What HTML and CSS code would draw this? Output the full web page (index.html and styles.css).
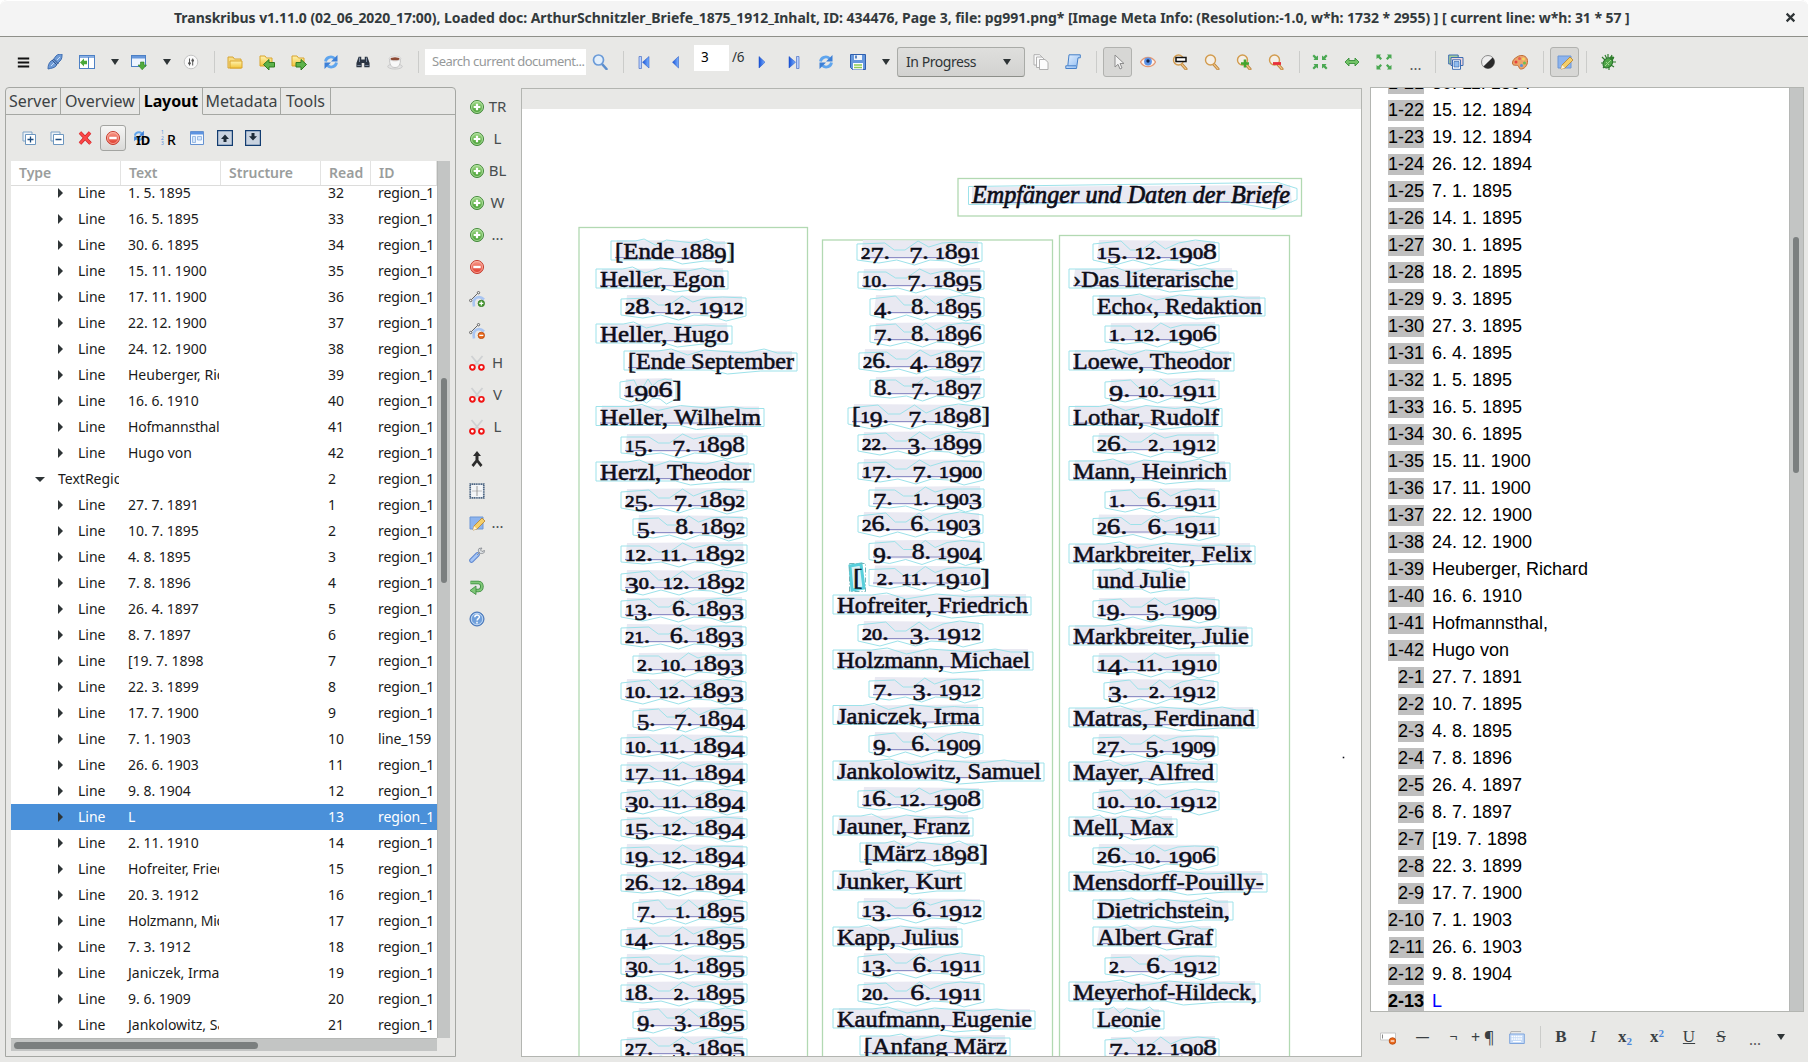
FILE: index.html
```html
<!DOCTYPE html>
<html lang="en">
<head>
<meta charset="utf-8">
<title>Transkribus v1.11.0</title>
<link rel="stylesheet" href="styles.css">
</head>
<body>
<svg class="sprite" aria-hidden="true">
  <defs>
    <linearGradient id="gGreen" x1="0" y1="0" x2="0" y2="1"><stop offset="0" stop-color="#a5dc8c"/><stop offset="1" stop-color="#3f9a2c"/></linearGradient>
    <linearGradient id="gRed" x1="0" y1="0" x2="0" y2="1"><stop offset="0" stop-color="#f9a08f"/><stop offset="1" stop-color="#dd3426"/></linearGradient>
    <linearGradient id="gBlue" x1="0" y1="0" x2="1" y2="0"><stop offset="0" stop-color="#1550d8"/><stop offset="1" stop-color="#7db3ff"/></linearGradient>
    <linearGradient id="gFolder" x1="0" y1="0" x2="0" y2="1"><stop offset="0" stop-color="#fff3b0"/><stop offset="1" stop-color="#f2c53a"/></linearGradient>
    <linearGradient id="gPane" x1="0" y1="0" x2="1" y2="1"><stop offset="0" stop-color="#e6f1ff"/><stop offset="1" stop-color="#8dbbf2"/></linearGradient>
  </defs>
  <symbol id="menu" viewBox="0 0 16 16"><path d="M1 3h14M1 8h14M1 13h14" stroke="#111" stroke-width="2.6"/></symbol>
  <symbol id="plug" viewBox="0 0 16 16"><path d="M1 15c0-4 1-6 3-8l2-1 3-4c2-2 4-2 6-2 0 3 0 5-2 7l-3 3-1 2c-2 2-4 2-8 3z" fill="#6f9bd6" stroke="#3f6db0"/><path d="M5 6l5 5M6.500 5l5 5" stroke="#33548a"/><path d="M4 12l3-3M10 6l3-3" stroke="#c6dcf7"/></symbol>
  <symbol id="panel" viewBox="0 0 16 16"><rect x=".5" y="1.500" width="15" height="13" fill="#fff" stroke="#4d80c4"/><path d="M1 2h14v2H1z" fill="#8ab0e4"/><path d="M9.500 3v11" stroke="#4d80c4"/><path d="M1 8.500l4-4v2.300h3v3.500H5v2.300z" fill="#48a83a"/></symbol>
  <symbol id="window" viewBox="0 0 16 16"><rect x=".5" y="1.500" width="14" height="11" fill="#eef5ff" stroke="#4d80c4"/><path d="M1 2h13v2.500H1z" fill="#6798dc"/><path d="M9.500 8h3.500v3h2.500L11.200 15.800 7 11h2.500z" fill="#52ab3d" stroke="#2e7d22" stroke-width=".6"/></symbol>
  <symbol id="dial" viewBox="0 0 16 16"><circle cx="8" cy="8" r="6.800" fill="#fafafa" stroke="#c4c4c4"/><path d="M6.500 4.500v7M9.700 4.500v7" stroke="#555"/><circle cx="6.500" cy="9.300" r="1.300" fill="#555"/><circle cx="9.700" cy="6.500" r="1.300" fill="#555"/></symbol>
  <symbol id="folder" viewBox="0 0 16 16"><path d="M1 14V3h5l1.500 2H14v9z" fill="#f7dc83" stroke="#d7a534"/><path d="M3 14V7h12v7z" fill="url(#gFolder)" stroke="#d9a42c"/></symbol>
  <symbol id="folderin" viewBox="0 0 16 16"><path d="M1 12V2h5l1.500 2H13v8z" fill="url(#gFolder)" stroke="#d9a42c"/><path d="M4.500 10.500l5.500-5v3h5.500v4.500H10v3z" fill="#5db24a" stroke="#2f7a20"/></symbol>
  <symbol id="folderout" viewBox="0 0 16 16"><path d="M1 12V2h5l1.500 2H13v8z" fill="url(#gFolder)" stroke="#d9a42c"/><path d="M15.500 10.500L10 5.500v3H5v4.500h5v3z" fill="#5db24a" stroke="#2f7a20"/></symbol>
  <symbol id="refresh" viewBox="0 0 16 16"><path d="M2.500 7.500C3 3.500 8 1.500 11.500 4.300" fill="none" stroke="#5fa5ee" stroke-width="2.800"/><path d="M14.500 1v6.500H8z" fill="#3c7fd6"/><path d="M13.500 8.500c-.5 4-5.500 6-9 3.200" fill="none" stroke="#5fa5ee" stroke-width="2.800"/><path d="M1.500 15V8.500H8z" fill="#3c7fd6"/></symbol>
  <symbol id="binoc" viewBox="0 0 16 16"><path d="M3 2h3v3h4V2h3l2.500 7v5H9.500V9h-3v5H.5V9z" fill="#2b3442"/><path d="M1.500 12h4M10.500 12h4M4 3v5M12 3v5" stroke="#8494ab"/></symbol>
  <symbol id="cup" viewBox="0 0 16 16"><ellipse cx="8" cy="12.500" rx="7.300" ry="2.600" fill="#e2e2e2" stroke="#bbb" stroke-width=".6"/><path d="M2.500 4.500c0 6 1.500 9 5.500 9s5.500-3 5.500-9z" fill="#f8f8f8" stroke="#b3b3b3" stroke-width=".7"/><ellipse cx="8" cy="4.500" rx="5.800" ry="2.400" fill="#fff" stroke="#bbb" stroke-width=".6"/><ellipse cx="8" cy="4.700" rx="4.500" ry="1.500" fill="#8c4a34"/></symbol>
  <symbol id="search" viewBox="0 0 16 16"><path d="M10 10l4.500 5" stroke="#5d8fcd" stroke-width="2.600" stroke-linecap="round"/><circle cx="6.500" cy="6" r="5" fill="#e3effb" stroke="#6b9bd8" stroke-width="1.700"/></symbol>
  <symbol id="first" viewBox="0 0 16 16"><path d="M3 2.500h2.500v12H3z" fill="#b9d0ff" stroke="#4a70c4" stroke-width=".7"/><path d="M13 2.500v11.500L6.500 8.200z" fill="url(#gBlue)" stroke="#1d4fc0" stroke-width=".5"/></symbol>
  <symbol id="prev" viewBox="0 0 16 16"><path d="M10.500 2.500v11.500L4.500 8.200z" fill="url(#gBlue)" stroke="#1d4fc0" stroke-width=".5"/></symbol>
  <symbol id="next" viewBox="0 0 16 16"><path d="M5 2.500v11.500l6-5.800z" fill="url(#gBlue)" stroke="#1d4fc0" stroke-width=".5"/></symbol>
  <symbol id="last" viewBox="0 0 16 16"><path d="M10.500 2.500H13v12h-2.500z" fill="#b9d0ff" stroke="#4a70c4" stroke-width=".7"/><path d="M3 2.500v11.500l6.500-5.800z" fill="url(#gBlue)" stroke="#1d4fc0" stroke-width=".5"/></symbol>
  <symbol id="save" viewBox="0 0 16 16"><path d="M.5.500h15v15h-13l-2-2z" fill="#6597dd" stroke="#2f5fae"/><path d="M4 1h8v5H4z" fill="#eef4fb"/><path d="M5 1.500h2v3H5z" fill="#5b86c4"/><path d="M3 9h10v6.500H3z" fill="#fff"/><path d="M4 11h8M4 13.500h8" stroke="#8ecb54" stroke-width="1.400"/></symbol>
  <symbol id="copies" viewBox="0 0 16 16"><g fill="#fcfcfc" stroke="#a9a9a9" stroke-width=".9"><path d="M1 .700h5.500L9 3v8H1z"/><path d="M3.500 3h5.500L11.500 5.500v8h-8z"/><path d="M6.500 5.500H12L15 8.300v7.200H6.500z"/></g></symbol>
  <symbol id="scroll" viewBox="0 0 16 16"><path d="M4 .8h11.300v3H13L11.500 14.500H.8v-2.700h2z" fill="url(#gPane)" stroke="#4680c8"/><path d="M3 11.800h8" stroke="#4680c8"/></symbol>
  <symbol id="pointer" viewBox="0 0 16 16"><path d="M5 1v12l3-2.700 2 4.700 2-1-2-4.500h4z" fill="#f3f3f3" stroke="#8e8e8e"/></symbol>
  <symbol id="eye" viewBox="0 0 16 16"><path d="M.5 8C4 2 12 2 15.500 8 12 14 4 14 .5 8z" fill="#fdf4ef" stroke="#e39a77" stroke-width="1.300"/><circle cx="8" cy="7.500" r="3.900" fill="#5c93e8"/><circle cx="8" cy="7" r="1.700" fill="#13254e"/></symbol>
  <symbol id="mag" viewBox="0 0 16 16"><path d="M9.500 10l4.500 5" stroke="#b97f39" stroke-width="3" stroke-linecap="round"/><path d="M9.500 10l4.500 5" stroke="#f0c684" stroke-width="1.200" stroke-linecap="round"/><circle cx="6.500" cy="6" r="5" fill="#f4efe7" stroke="#d29b4d" stroke-width="1.400"/></symbol>
  <symbol id="magrect" viewBox="0 0 16 16"><use href="#mag"/><path d="M4 3.500h10v4H4z" fill="#fff" stroke="#111" stroke-width="1.500"/></symbol>
  <symbol id="magplus" viewBox="0 0 16 16"><use href="#mag"/><path d="M9 5.500v8M5 9.500h8" stroke="#43a52f" stroke-width="2.600"/></symbol>
  <symbol id="magminus" viewBox="0 0 16 16"><use href="#mag"/><path d="M5 9.500h8" stroke="#e8303b" stroke-width="2.800"/></symbol>
  <symbol id="shrink" viewBox="0 0 16 16"><g fill="#4aa852"><path id="shr" d="M6 6H1.500l1.200-1.600L.5 2 2 .5l2.400 2.200L6 1.500z"/><use href="#shr" transform="matrix(-1 0 0 1 16 0)"/><use href="#shr" transform="matrix(1 0 0 -1 0 16)"/><use href="#shr" transform="matrix(-1 0 0 -1 16 16)"/></g></symbol>
  <symbol id="grow" viewBox="0 0 16 16"><g fill="#4aa852"><path id="gro" d="M.5.500H5L3.800 2.100 6 4.500 4.500 6 2.100 3.800.5 5z"/><use href="#gro" transform="matrix(-1 0 0 1 16 0)"/><use href="#gro" transform="matrix(1 0 0 -1 0 16)"/><use href="#gro" transform="matrix(-1 0 0 -1 16 16)"/></g></symbol>
  <symbol id="fitw" viewBox="0 0 16 16"><path d="M1 8l4-4v2.500h6V4l4 4-4 4V9.500H5V12z" fill="#72c267" stroke="#378f39" stroke-width=".9"/></symbol>
  <symbol id="layers" viewBox="0 0 16 16"><path d="M.7 1h9.500v9H.7z" fill="#a5cf9b" stroke="#3d6db3"/><path d="M3 3.500h12v8H3z" fill="#f0d6dc" stroke="#3d6db3"/><path d="M4.500 5.800h8v9.500h-8z" fill="#fff" stroke="#3d6db3"/><path d="M6 7.500h5v5.500H6z" fill="#8fbbee" stroke="#3d6db3" stroke-width=".7"/></symbol>
  <symbol id="contrast" viewBox="0 0 16 16"><circle cx="8" cy="8" r="6.500" fill="#eee" stroke="#8b8b8b"/><path d="M12.600 3.400a6.500 6.500 0 0 1-9.200 9.200z" fill="#2a2a2a"/></symbol>
  <symbol id="palette" viewBox="0 0 16 16"><path d="M5 3c4-3 10-1.500 10.500 3.500.4 5-3.500 9-7 8.500-2-.5-1-3-3-3.500S.5 12 .5 9s2-4.500 4.500-6z" fill="#eba56b" stroke="#c06c35"/><circle cx="4" cy="8" r="1.500" fill="#e8423e"/><circle cx="7.500" cy="4.500" r="1.500" fill="#e95d52"/><circle cx="11.500" cy="5" r="1.500" fill="#f5da5e"/><circle cx="12.500" cy="9" r="1.500" fill="#6cbf52"/><circle cx="9.500" cy="11.500" r="1.500" fill="#5790dc"/></symbol>
  <symbol id="edit" viewBox="0 0 16 16"><path d="M1 2h13v12H1z" fill="#8db4ee" stroke="#6d97d6"/><path d="M4 15l1-4 8-8 3 3-8 8z" fill="#f5cf69" stroke="#b9812a" stroke-width=".8"/><path d="M4 15l1-4 3 3z" fill="#fff3d8"/></symbol>
  <symbol id="bug" viewBox="0 0 16 16"><path d="M2 3l3 3M8 0l0 4M1 9h4M3 14l3-3M9 16v-4M14 13l-3-2M16 8h-4M14 3l-3 3M5 1l2 4M12 1l-2 4" stroke="#2f7e2c" stroke-width="1.200"/><ellipse cx="7.800" cy="9" rx="4.300" ry="5.600" transform="rotate(40 8 9)" fill="#4ea548" stroke="#28732b"/><path d="M5 12l6-6M6 8l3 3" stroke="#a1d78f"/><circle cx="11.700" cy="4.300" r="2" fill="#2f7e2c"/></symbol>
  <symbol id="plus" viewBox="0 0 16 16"><circle cx="8" cy="8" r="6.500" fill="url(#gGreen)" stroke="#43893a"/><circle cx="8" cy="8" r="5.500" fill="none" stroke="#c6ecb7" stroke-width=".7"/><path d="M8 4.700v6.600M4.700 8h6.600" stroke="#fff" stroke-width="2.200"/></symbol>
  <symbol id="minus" viewBox="0 0 16 16"><circle cx="8" cy="8" r="6.500" fill="url(#gRed)" stroke="#c43a2d"/><circle cx="8" cy="8" r="5.500" fill="none" stroke="#ffc4b8" stroke-width=".7"/><path d="M4.300 8h7.400" stroke="#fff" stroke-width="2.400"/></symbol>
  <symbol id="ptadd" viewBox="0 0 16 16"><path d="M5 15.500c-1-5 0-8 3-9s5 0 7 2" fill="none" stroke="#a9c5f2" stroke-width="2.600"/><path d="M1.500 9.500L9.500 1.500" stroke="#666"/><circle cx="1.700" cy="9.500" r="1.200" fill="#eee" stroke="#666"/><circle cx="9.500" cy="1.700" r="1.200" fill="#eee" stroke="#666"/><circle cx="12.300" cy="12.400" r="3.200" fill="#4b9e35" stroke="#2f741e" stroke-width=".8"/><path d="M12.300 10.400v4M10.300 12.400h4" stroke="#fff" stroke-width="1.200"/></symbol>
  <symbol id="ptdel" viewBox="0 0 16 16"><path d="M5 15.500c-1-5 0-8 3-9s5 0 7 2" fill="none" stroke="#a9c5f2" stroke-width="2.600"/><path d="M1.500 9.500L9.500 1.500" stroke="#666"/><circle cx="1.700" cy="9.500" r="1.200" fill="#eee" stroke="#666"/><circle cx="9.500" cy="1.700" r="1.200" fill="#eee" stroke="#666"/><circle cx="12.300" cy="12.400" r="3.200" fill="#e9691c" stroke="#b64508" stroke-width=".8"/><path d="M10.300 12.400h4" stroke="#fff" stroke-width="1.300"/></symbol>
  <symbol id="cut" viewBox="0 0 16 16"><path d="M2.500 1l7.500 9M13.500 1L6 10" stroke="#cfd1d3" stroke-width="1.800"/><circle cx="3.400" cy="12.300" r="2.400" fill="#fff" stroke="#f01414" stroke-width="1.900"/><circle cx="12.400" cy="12.300" r="2.400" fill="#fff" stroke="#f01414" stroke-width="1.900"/></symbol>
  <symbol id="merge" viewBox="0 0 16 16"><path d="M8 0l4 5H9.500v4l4 5-2 2L8 11.500 4.500 16l-2-2 4-5V5H4z" fill="#2c2c2c"/></symbol>
  <symbol id="table" viewBox="0 0 16 16"><rect x="1.200" y="1.200" width="13.600" height="13.600" fill="#f3f5f7" stroke="#4c6583" stroke-width="1.700" stroke-dasharray="1.300 .5"/><path d="M8 3v10" stroke="#999"/><path d="M3.500 8h9" stroke="#888" stroke-dasharray="1 1"/></symbol>
  <symbol id="wrench" viewBox="0 0 16 16"><path d="M2.500 13.500l6-6" stroke="#5e87cf" stroke-width="4.600" stroke-linecap="round"/><path d="M2.500 13.500l6-6" stroke="#a4c4f5" stroke-width="2.600" stroke-linecap="round"/><path d="M8 8l3-3M10 1.500c-1.500 2 0 5 1.500 5s4 .5 4-3l-2.500 1-1.500-1.500 1.500-2z" stroke="#909499" fill="#dcdfe2"/></symbol>
  <symbol id="undo" viewBox="0 0 16 16"><path d="M1.500 3.500h8c4.500 0 4.500 8 0 8H6" fill="none" stroke="#37863a" stroke-width="3.600"/><path d="M1.500 3.500h8c4.500 0 4.500 8 0 8H6" fill="none" stroke="#7fc777" stroke-width="2"/><path d="M7 7v8.500L1 11.500z" fill="#7fc777" stroke="#37863a" stroke-width=".8"/></symbol>
  <symbol id="help" viewBox="0 0 16 16"><circle cx="8" cy="8" r="7" fill="#6f9fdb" stroke="#4170b4"/><circle cx="8" cy="8" r="5.700" fill="none" stroke="#d4e5f8" stroke-width=".8"/><path d="M5.800 6.300c0-3 4.600-3 4.600-.3 0 1.600-2.300 1.500-2.300 3.400M8 10.800v1.600" fill="none" stroke="#fff" stroke-width="1.500"/></symbol>
  <symbol id="expand" viewBox="0 0 16 16"><path d="M2 2h9v9H2z" fill="#eef3f8" stroke="#7ea3c6"/><path d="M4.500 4.500h10v10h-10z" fill="#fff" stroke="#6c96bf"/><path d="M9.500 6.500v6M6.500 9.500h6" stroke="#1d4d80" stroke-width="1.300"/></symbol>
  <symbol id="collapse" viewBox="0 0 16 16"><path d="M2 2h9v9H2z" fill="#eef3f8" stroke="#7ea3c6"/><path d="M4.500 4.500h10v10h-10z" fill="#fff" stroke="#6c96bf"/><path d="M6.500 9.500h6" stroke="#1d4d80" stroke-width="1.300"/></symbol>
  <symbol id="cross" viewBox="0 0 16 16"><path d="M3 2.500l10.500 11M13 2.500L3 13.500" stroke="#c92026" stroke-width="3.400"/><path d="M3 2.500l10.500 11M13 2.500L3 13.500" stroke="#fb4747" stroke-width="2.400"/></symbol>
  <symbol id="details" viewBox="0 0 16 16"><path d="M1.500 1.500h13v13h-13z" fill="#f4f9ff" stroke="#6592d1"/><path d="M2 2h12v2.500H2z" fill="#5d93e0"/><path d="M3.500 6.500h3v6h-3zM8.500 6.500h4v3.500h-4z" fill="#d6e6fa" stroke="#88aede" stroke-width=".8"/></symbol>
  <symbol id="moveup" viewBox="0 0 16 16"><path d="M.6.600h14.800v14.800H.6z" fill="#c9d3e0" stroke="#123c70" stroke-width="1.200"/><path d="M8 4.500l4 4.500H9.500v3h-3V9H4z" fill="#1e2b38"/></symbol>
  <symbol id="movedown" viewBox="0 0 16 16"><path d="M.6.600h14.800v14.800H.6z" fill="#c9d3e0" stroke="#123c70" stroke-width="1.200"/><path d="M8 10.500L4 6.300h2.500V3h3v3.300H12z" fill="#1e2b38"/></symbol>
  <symbol id="rowdel" viewBox="0 0 16 16"><path d="M.5 4h15v7H.5z" fill="#fff" stroke="#c5c5c5"/><path d="M2.500 5.500v4" stroke="#888"/><circle cx="12.500" cy="12" r="3.300" fill="#e9691c" stroke="#b64508" stroke-width=".8"/><path d="M10.700 12h3.600" stroke="#fff" stroke-width="1.200"/></symbol>
  <symbol id="keyb" viewBox="0 0 16 16"><path d="M1 6l1-3.500h10" fill="none" stroke="#b4b4b4"/><path d="M.7 5h14.600v9.500H.7z" fill="#c6dbf7" stroke="#7fa5dd"/><path d="M2.500 7.500h11M2.500 10h11" stroke="#fff" stroke-width="1.400" stroke-dasharray="1.600 .6"/><path d="M4 12.500h8" stroke="#fff"/></symbol>
</svg>

<div class="window">
  <header class="titlebar"><h1 class="title">Transkribus v1.11.0 (02_06_2020_17:00), Loaded doc: ArthurSchnitzler_Briefe_1875_1912_Inhalt, ID: 434476, Page 3, file: pg991.png* [Image Meta Info: (Resolution:-1.0, w*h: 1732 * 2955) ] [ current line: w*h: 31 * 57 ]</h1><svg class="close" viewBox="0 0 10 10"><path d="M1.500 1.500l7 7M8.500 1.500l-7 7" stroke="#2e3436" stroke-width="2"/></svg></header>

  <div class="toolbar">
    <span class="cell"><svg class="ic ham"><use href="#menu"/></svg></span>
    <span class="cell"><svg class="ic"><use href="#plug"/></svg></span>
    <span class="cell"><svg class="ic"><use href="#panel"/></svg></span>
    <span class="drop"></span>
    <span class="cell"><svg class="ic"><use href="#window"/></svg></span>
    <span class="drop"></span>
    <span class="cell"><svg class="ic"><use href="#dial"/></svg></span>
    <span class="sep"></span>
    <span class="cell"><svg class="ic"><use href="#folder"/></svg></span>
    <span class="cell"><svg class="ic"><use href="#folderin"/></svg></span>
    <span class="cell"><svg class="ic"><use href="#folderout"/></svg></span>
    <span class="cell"><svg class="ic"><use href="#refresh"/></svg></span>
    <span class="cell"><svg class="ic bin"><use href="#binoc"/></svg></span>
    <span class="cell"><svg class="ic"><use href="#cup"/></svg></span>
    <span class="sep"></span>
    <span class="field search">Search current document...</span>
    <span class="cell narrow"><svg class="ic"><use href="#search"/></svg></span>
    <span class="sep wide"></span>
    <span class="cell"><svg class="ic"><use href="#first"/></svg></span>
    <span class="cell"><svg class="ic"><use href="#prev"/></svg></span>
    <span class="field page">3</span><span class="total">/6</span>
    <span class="cell"><svg class="ic"><use href="#next"/></svg></span>
    <span class="cell"><svg class="ic"><use href="#last"/></svg></span>
    <span class="cell"><svg class="ic"><use href="#refresh"/></svg></span>
    <span class="cell"><svg class="ic"><use href="#save"/></svg></span>
    <span class="drop"></span>
    <span class="combo">In Progress<span class="drop"></span></span>
    <span class="cell"><svg class="ic"><use href="#copies"/></svg></span>
    <span class="cell"><svg class="ic"><use href="#scroll"/></svg></span>
    <span class="sep"></span>
    <span class="pressed"><svg class="ic"><use href="#pointer"/></svg></span>
    <span class="cell"><svg class="ic"><use href="#eye"/></svg></span>
    <span class="cell"><svg class="ic"><use href="#magrect"/></svg></span>
    <span class="cell"><svg class="ic"><use href="#mag"/></svg></span>
    <span class="cell"><svg class="ic"><use href="#magplus"/></svg></span>
    <span class="cell"><svg class="ic"><use href="#magminus"/></svg></span>
    <span class="sep"></span>
    <span class="cell"><svg class="ic"><use href="#shrink"/></svg></span>
    <span class="cell"><svg class="ic"><use href="#fitw"/></svg></span>
    <span class="cell"><svg class="ic"><use href="#grow"/></svg></span>
    <span class="cell narrow more">...</span>
    <span class="sep"></span>
    <span class="cell"><svg class="ic"><use href="#layers"/></svg></span>
    <span class="cell"><svg class="ic"><use href="#contrast"/></svg></span>
    <span class="cell"><svg class="ic"><use href="#palette"/></svg></span>
    <span class="sep"></span>
    <span class="pressed"><svg class="ic"><use href="#edit"/></svg></span>
    <span class="sep"></span>
    <span class="cell lastcell"><svg class="ic"><use href="#bug"/></svg></span>
  </div>

  <main class="body">
    <section class="side">
      <nav class="tabs">
        <span class="tab t1">Server</span><span class="tab t2">Overview</span><span class="tab t3 active">Layout</span><span class="tab t4">Metadata</span><span class="tab t5">Tools</span><span class="tabfill"></span>
      </nav>
      <div class="sidebar-tools">
        <svg class="ic"><use href="#expand"/></svg>
        <svg class="ic"><use href="#collapse"/></svg>
        <svg class="ic"><use href="#cross"/></svg>
        <span class="raised"><svg class="ic"><use href="#minus"/></svg></span>
        <span class="glyph"><svg class="ic idr"><use href="#refresh"/></svg><b class="over">ID</b></span>
        <span class="glyph"><b class="digits">1<br>2<br>3</b><b class="over r">R</b></span>
        <svg class="ic"><use href="#details"/></svg>
        <svg class="ic"><use href="#moveup"/></svg>
        <svg class="ic"><use href="#movedown"/></svg>
      </div>
      <div class="tree">
        <div class="tree-view">
          <div class="head"><span class="h">Type</span><span class="h">Text</span><span class="h">Structure</span><span class="h">Read</span><span class="h">ID</span></div>
          <div class="rows-clip"><div class="rows" id="rows"></div></div>
        </div>
        <div class="vscroll"><div class="vthumb"></div></div>
        <div class="hscroll"><div class="hthumb"></div></div>
      </div>
    </section>

    <aside class="tools">
      <div class="tool"><svg class="ic"><use href="#plus"/></svg><span class="tl">TR</span></div>
      <div class="tool"><svg class="ic"><use href="#plus"/></svg><span class="tl">L</span></div>
      <div class="tool"><svg class="ic"><use href="#plus"/></svg><span class="tl">BL</span></div>
      <div class="tool"><svg class="ic"><use href="#plus"/></svg><span class="tl">W</span></div>
      <div class="tool"><svg class="ic"><use href="#plus"/></svg><span class="tl">...</span></div>
      <div class="tool"><svg class="ic"><use href="#minus"/></svg></div>
      <div class="tool"><svg class="ic"><use href="#ptadd"/></svg></div>
      <div class="tool"><svg class="ic"><use href="#ptdel"/></svg></div>
      <div class="tool"><svg class="ic"><use href="#cut"/></svg><span class="tl">H</span></div>
      <div class="tool"><svg class="ic"><use href="#cut"/></svg><span class="tl">V</span></div>
      <div class="tool"><svg class="ic"><use href="#cut"/></svg><span class="tl">L</span></div>
      <div class="tool"><svg class="ic"><use href="#merge"/></svg></div>
      <div class="tool"><svg class="ic"><use href="#table"/></svg></div>
      <div class="tool"><svg class="ic"><use href="#edit"/></svg><span class="tl">...</span></div>
      <div class="tool"><svg class="ic"><use href="#wrench"/></svg></div>
      <div class="tool"><svg class="ic"><use href="#undo"/></svg></div>
      <div class="tool"><svg class="ic"><use href="#help"/></svg></div>
    </aside>

    <section class="canvas"><svg class="scan" id="scan" width="838" height="967" viewBox="522 89 838 967"></svg></section>

    <section class="right">
      <div class="editor">
        <div class="lines-clip"><div class="lines" id="lines"></div></div>
        <div class="vscroll ed"><div class="vthumb edthumb"></div></div>
      </div>
      <div class="format">
        <span class="cell"><svg class="ic"><use href="#rowdel"/></svg></span>
        <span class="cell dash">—</span>
        <span class="cell narrow neg">¬</span>
        <span class="par">+ ¶</span>
        <span class="cell kb"><svg class="ic"><use href="#keyb"/></svg></span>
        <span class="sep"></span>
        <span class="cell ser"><b>B</b></span>
        <span class="cell ser"><i>I</i></span>
        <span class="cell ser"><b>x</b><sub>2</sub></span>
        <span class="cell ser"><b>x</b><sup>2</sup></span>
        <span class="cell ser"><u>U</u></span>
        <span class="cell ser"><s>S</s></span>
        <span class="cell more m2">...</span>
        <span class="drop"></span>
      </div>
    </section>
  </main>
</div>
<script src="script.js"></script>
</body>
</html>
```

FILE: styles.css
```css
* { box-sizing: border-box; }
body { margin: 0; background: #fff; font: 14px/20px "Noto Sans", "Open Sans", sans-serif; color: #000; }
.sprite { position: absolute; width: 0; height: 0; }
.window { width: 1808px; height: 1062px; background: #e8e8e6; overflow: hidden; border-radius: 7px 7px 0 0; display: flex; flex-direction: column; }
.titlebar { height: 37px; flex: none; background: #f4f4f4; border-top: 1px solid #fff; border-bottom: 1px solid #8f908a; border-radius: 7px 7px 0 0; display: flex; align-items: center; padding: 0 12px 2px 174px; justify-content: space-between; }
.title { margin: 0; font-size: 14px; font-weight: 700; color: #333a3c; white-space: nowrap; letter-spacing: -.038px; }
.close { width: 11px; height: 11px; }

.ic { width: 16px; height: 16px; flex: none; display: block; }
.ham { width: 15px; height: 13px; }
.bin { width: 14px; height: 14px; }
.toolbar { height: 50px; flex: none; display: flex; align-items: center; padding-left: 7px; color: #2e3436; }
.cell { width: 32px; flex: none; display: flex; justify-content: center; align-items: center; }
.cell.narrow { width: 28px; }
.lastcell { padding-left: 2px; }
.drop { width: 20px; flex: none; padding-left: 8px; }
.drop::before { content: ""; display: block; border: 4.500px solid transparent; border-top: 6px solid #2e3436; border-bottom: 0; width: 0; }
.sep { width: 12px; height: 22px; flex: none; padding-left: 7px; }
.sep::before { content: ""; display: block; width: 1px; height: 22px; background: #cbccca; }
.sep.wide { width: 14px; padding-left: 9px; }
.field { background: #fff; height: 30px; line-height: 30px; white-space: nowrap; overflow: hidden; flex: none; }
.search { width: 161px; height: 26px; line-height: 25px; margin-left: 2px; padding-left: 7px; color: #96999a; font-size: 13px; letter-spacing: -.5px; }
.page { width: 35px; height: 26px; line-height: 25px; margin-left: 2px; margin-bottom: 8px; padding-left: 7px; color: #000; font-size: 13.500px; }
.total { width: 17px; padding-left: 3px; margin-bottom: 10px; flex: none; font-size: 13.500px; letter-spacing: -.3px; }
.combo { width: 128px; height: 30px; margin-left: 3px; flex: none; border: 1px solid #a9aba7; border-bottom-color: #8d8f8a; border-radius: 3px; background: linear-gradient(#dfdfdd, #d2d2d0); display: flex; align-items: center; justify-content: space-between; padding: 0 8px; letter-spacing: -.45px; }
.combo .drop { padding-left: 3px; width: 16px; }
.pressed { width: 29px; height: 30px; margin-left: 2px; flex: none; border: 1px solid #b1b2af; border-radius: 3px; background: #d7d7d5; display: flex; align-items: center; justify-content: center; }
.more { font-size: 15px; color: #555; padding-top: 3px; padding-left: 3px; }

.body { flex: none; height: 975px; display: flex; padding-left: 5px; }
.side { width: 451px; height: 970px; border: 1px solid #a5a7a3; border-radius: 4px 4px 0 0; display: flex; flex-direction: column; }
.tabs { height: 27px; display: flex; flex: none; font-size: 16px; color: #3c4244; }
.tab { border-right: 1px solid #a5a7a3; border-bottom: 1px solid #a5a7a3; line-height: 26px; text-align: center; flex: none; white-space: nowrap; }
.t1 { width: 55px; } .t2 { width: 79px; } .t3 { width: 63px; } .t4 { width: 78px; } .t5 { width: 50px; }
.tab.active { border-bottom-color: transparent; font-weight: 700; color: #000; letter-spacing: -.1px; }
.tabfill { flex: 1; border-bottom: 1px solid #a5a7a3; }
.sidebar-tools { height: 46px; flex: none; display: flex; align-items: center; gap: 12px; padding-left: 15px; }
.raised { width: 26px; height: 26px; margin: 0 -5px; border: 1px solid #a3a4a1; border-radius: 3px; background: linear-gradient(#f6f6f5, #dadad8); display: flex; align-items: center; justify-content: center; }
.glyph { width: 16px; height: 16px; position: relative; }
.idr { width: 12px; height: 12px; }
.over { position: absolute; left: 3px; top: 1px; font: 700 13px/18px "Noto Sans", sans-serif; letter-spacing: -.3px; color: #000; }
.over.r { left: 6px; font-weight: 500; font-size: 14px; }
.digits { position: absolute; left: 0; top: 0; font: 5px/5.500px "Noto Sans", sans-serif; color: #5590dd; }
.tree { display: grid; grid-template-columns: 426px 13px; grid-template-rows: 877px 13px; margin-left: 5px; }
.tree-view { background: #fff; display: flex; flex-direction: column; overflow: hidden; }
.head, .row { display: grid; grid-template-columns: 110px 100px 100px 50px 66px; }
.head { height: 25px; flex: none; border-bottom: 1px solid #dcdcdb; color: #9a9d9c; font-weight: 600; font-size: 14px; }
.h { line-height: 23px; padding-left: 8px; border-right: 1px solid #e3e3e2; }
.rows-clip { flex: 1; overflow: hidden; }
.rows { margin-top: -6px; }
.row { height: 26px; line-height: 26px; color: #1a1a1a; }
.row .c { padding-left: 7px; margin-right: 2px; overflow: hidden; white-space: nowrap; }
.row .c:last-child { margin-right: 0; letter-spacing: -.1px; }
.row .name { letter-spacing: -.2px; }
.row .c:first-child { padding-left: 47px; display: flex; align-items: center; }
.row .c:first-child::before { content: ""; border: 5px solid transparent; border-left: 5px solid #2e3436; border-right: 0; margin-right: 15px; flex: none; }
.row.region .c:first-child { padding-left: 24px; }
.row.region .c:first-child::before { border: 5px solid transparent; border-top: 5px solid #2e3436; border-bottom: 0; margin-right: 13px; }
.row.sel { background: #4a90d9; color: #fff; }
.vscroll { background: #c3c5c4; border-left: 1px solid #b5b7b5; padding: 217px 3px 0 3px; }
.vthumb { width: 6px; height: 205px; border-radius: 3px; background: #7b7f7f; }
.hscroll { background: #c3c5c4; border-top: 1px solid #b5b7b5; padding: 3px; }
.hthumb { width: 244px; height: 7px; border-radius: 4px; background: #7b7f7f; }

.tools { width: 65px; padding: 4px 0 0 13px; color: #474d4f; }
.tool { height: 32px; display: flex; align-items: center; }
.tl { width: 26px; height: 22px; text-align: center; font-size: 15px; padding-right: 1px; }

.canvas { width: 841px; height: 969px; margin-top: 1px; border: 1px solid #b3b5b1; background: linear-gradient(#e8e8e6 20px, #fff 20px); overflow: hidden; }
.scan { display: block; font-family: "Liberation Serif", serif; }
.scan .ink { fill: #0d0d18; stroke: #0d0d18; stroke-width: .55px; font-size: 24px; white-space: pre; }
.scan .small { font-size: 17.500px; stroke-width: .7px; }
.scan .title-ink { font-style: italic; font-size: 25px; stroke-width: .7px; }
.scan .shade { fill: #e9e9f2; }
.scan .base { stroke: #8f8fc6; stroke-width: 1px; fill: none; }
.scan .poly { stroke: #9de2ea; stroke-width: 1px; fill: none; }
.scan .reg { stroke: #b2d9b2; stroke-width: 1.300px; fill: none; }
.scan .cur { fill: #bfe6ee; stroke: #57cfdb; stroke-width: 3px; }
.scan .curbox { fill: none; stroke: #70b5ba; stroke-dasharray: 5 2 1 2; }

.right { width: 434px; margin: 0 0 0 8px; }
.editor { height: 925px; border: 1px solid #b3b5b1; background: #fff; display: flex; }
.lines-clip { flex: 1; overflow: hidden; }
.lines { margin-top: -18px; font: 18px/27px "Liberation Sans", Arial, sans-serif; }
.line { height: 27px; display: flex; align-items: center; }
.num { width: 53px; flex: none; display: flex; justify-content: flex-end; margin-right: 8px; }
.tag { background: #bfbfbf; line-height: 21px; height: 21px; }
.line.now .tag { font-weight: 700; }
.line.now .txt { color: #0000ff; }
.vscroll.ed { width: 14px; padding: 149px 3px 0; }
.edthumb { height: 236px; }
.format { height: 50px; display: flex; align-items: center; padding-left: 2px; color: #3a4043; }
.format .dash { width: 37px; font-size: 14px; }
.format .neg { width: 25px; font-size: 14px; }
.par { width: 37px; padding-left: 5px; font-size: 16px; white-space: nowrap; flex: none; letter-spacing: -.1px; }
.kb { width: 28px; margin-right: 2px; }
.ser { font: 17px/20px "Liberation Serif", serif; }
.ser sub, .ser sup { font-size: 11px; color: #4b87dc; line-height: 1; font-weight: 700; }
.ser sub { padding-top: 9px; }
.ser sup { padding-bottom: 7px; }
.m2 { padding-left: 4px; }
```

FILE: script.js
```js
const SVG = "http://www.w3.org/2000/svg";

// Layout tree
const treeRows = [
  ["1. 5. 1895", 32], ["16. 5. 1895", 33], ["30. 6. 1895", 34], ["15. 11. 1900", 35], ["17. 11. 1900", 36],
  ["22. 12. 1900", 37], ["24. 12. 1900", 38], ["Heuberger, Richard", 39], ["16. 6. 1910", 40],
  ["Hofmannsthal,", 41, "tight"], ["Hugo von", 42], ["", 2, "region"], ["27. 7. 1891", 1], ["10. 7. 1895", 2],
  ["4. 8. 1895", 3], ["7. 8. 1896", 4], ["26. 4. 1897", 5], ["8. 7. 1897", 6], ["[19. 7. 1898", 7],
  ["22. 3. 1899", 8], ["17. 7. 1900", 9], ["7. 1. 1903", 10, "", "line_159"], ["26. 6. 1903", 11],
  ["9. 8. 1904", 12], ["L", 13, "sel"], ["2. 11. 1910", 14], ["Hofreiter, Friedrich", 15],
  ["20. 3. 1912", 16], ["Holzmann, Michael", 17, "tight"], ["7. 3. 1912", 18], ["Janiczek, Irma", 19],
  ["9. 6. 1909", 20], ["Jankolowitz, Samuel", 21]
];
document.getElementById("rows").innerHTML = treeRows.map(([text, read, kind = "", id = "region_1"]) =>
  `<div class="row ${kind}"><span class="c">${kind === "region" ? "TextRegion" : "Line"}</span><span class="c ${kind === "tight" ? "name" : ""}">${text}</span><span class="c"></span><span class="c">${read}</span><span class="c">${id}</span></div>`
).join("");

// Transcription lines
const first = ["30. 11. 1894", "15. 12. 1894", "19. 12. 1894", "26. 12. 1894", "7. 1. 1895", "14. 1. 1895", "30. 1. 1895",
  "18. 2. 1895", "9. 3. 1895", "27. 3. 1895", "6. 4. 1895", "1. 5. 1895", "16. 5. 1895", "30. 6. 1895", "15. 11. 1900",
  "17. 11. 1900", "22. 12. 1900", "24. 12. 1900", "Heuberger, Richard", "16. 6. 1910", "Hofmannsthal,", "Hugo von"];
const second = ["27. 7. 1891", "10. 7. 1895", "4. 8. 1895", "7. 8. 1896", "26. 4. 1897", "8. 7. 1897", "[19. 7. 1898",
  "22. 3. 1899", "17. 7. 1900", "7. 1. 1903", "26. 6. 1903", "9. 8. 1904", "L"];
const lines = first.map((t, i) => [`1-${i + 21}`, t]).concat(second.map((t, i) => [`2-${i + 1}`, t]));
document.getElementById("lines").innerHTML = lines.map(([n, t]) =>
  `<div class="line ${n === "2-13" ? "now" : ""}"><span class="num"><span class="tag">${n}</span></span><span class="txt">${t}</span></div>`
).join("");

// Scanned page: text, left edge, right edge, baseline
const page = [
  ["[Ende 1889]", 615, 735, 259], ["Heller, Egon", 600, 725, 287], ["28. 12. 1912", 625, 744, 314],
  ["Heller, Hugo", 600, 729, 342], ["[Ende September", 628, 794, 369], ["1906]", 624, 682, 397],
  ["Heller, Wilhelm", 600, 761, 424.5], ["15.   7. 1898", 625, 745, 452], ["Herzl, Theodor", 600, 751, 480],
  ["25.   7. 1892", 625, 745, 507], ["5.   8. 1892", 637, 745, 534], ["12. 11. 1892", 625, 745, 561],
  ["30. 12. 1892", 625, 745, 589], ["13.   6. 1893", 625, 744, 616], ["21.   6. 1893", 625, 744, 643],
  ["2. 10. 1893", 637, 744, 671], ["10. 12. 1893", 625, 744, 698], ["5.   7. 1894", 637, 745, 726],
  ["10. 11. 1894", 625, 745, 753], ["17. 11. 1894", 625, 745, 780], ["30. 11. 1894", 625, 745, 808],
  ["15. 12. 1894", 625, 745, 835], ["19. 12. 1894", 625, 745, 863], ["26. 12. 1894", 625, 745, 890],
  ["7.   1. 1895", 637, 745, 918], ["14.   1. 1895", 625, 745, 945], ["30.   1. 1895", 625, 745, 973],
  ["18.   2. 1895", 625, 745, 1000], ["9.   3. 1895", 637, 745, 1027], ["27.   3. 1895", 625, 745, 1055],
  ["27.   7. 1891", 861, 980, 259], ["10.   7. 1895", 862, 982, 287], ["4.   8. 1895", 874, 982, 314],
  ["7.   8. 1896", 874, 982, 341], ["26.   4. 1897", 863, 982, 368], ["8.   7. 1897", 874, 982, 395],
  ["[19.   7. 1898]", 852, 990, 423], ["22.   3. 1899", 862, 982, 450], ["17.   7. 1900", 862, 982, 478],
  ["7.   1. 1903", 873, 982, 505], ["26.   6. 1903", 862, 981, 531], ["9.   8. 1904", 873, 982, 558.5],
  ["[  2. 11. 1910]", 853, 990, 584.5], ["Hofreiter, Friedrich", 837, 1028, 613], ["20.   3. 1912", 862, 981, 640],
  ["Holzmann, Michael", 837, 1030, 668], ["7.   3. 1912", 873, 981, 696], ["Janiczek, Irma", 837, 980, 723.500],
  ["9.   6. 1909", 873, 981, 751], ["Jankolowitz, Samuel", 837, 1041, 779], ["16. 12. 1908", 862, 981, 806],
  ["Jauner, Franz", 837, 970, 834], ["[März 1898]", 864, 988, 861], ["Junker, Kurt", 837, 962, 889],
  ["13.   6. 1912", 862, 982, 917], ["Kapp, Julius", 837, 959, 945], ["13.   6. 1911", 862, 982, 972],
  ["20.   6. 1911", 862, 982, 1000], ["Kaufmann, Eugenie", 837, 1032, 1027], ["[Anfang März", 864, 1007, 1054],
  ["15. 12. 1908", 1097, 1217, 259], ["›Das literarische", 1073, 1234, 287], ["Echo‹, Redaktion", 1097, 1262, 314],
  ["1. 12. 1906", 1109, 1217, 341], ["Loewe, Theodor", 1073, 1231, 369], ["9. 10. 1911", 1109, 1217, 397],
  ["Lothar, Rudolf", 1073, 1219, 424.500], ["26.   2. 1912", 1097, 1216, 451], ["Mann, Heinrich", 1073, 1227, 479],
  ["1.   6. 1911", 1109, 1217, 507], ["26.   6. 1911", 1097, 1217, 533.500], ["Markbreiter, Felix", 1073, 1252, 562],
  ["und Julie", 1097, 1186, 588], ["19.   5. 1909", 1097, 1217, 616], ["Markbreiter, Julie", 1073, 1249, 644],
  ["14. 11. 1910", 1097, 1217, 671], ["3.   2. 1912", 1108, 1216, 698], ["Matras, Ferdinand", 1073, 1255, 726],
  ["27.   5. 1909", 1097, 1216, 753], ["Mayer, Alfred", 1073, 1214, 780], ["10. 10. 1912", 1097, 1217, 808],
  ["Mell, Max", 1073, 1174, 835], ["26. 10. 1906", 1097, 1216, 863], ["Mensdorff-Pouilly-", 1073, 1264, 890],
  ["Dietrichstein,", 1097, 1230, 918], ["Albert Graf", 1097, 1213, 945], ["2.   6. 1912", 1109, 1217, 973],
  ["Meyerhof-Hildeck,", 1073, 1257, 1000], ["Leonie", 1097, 1161, 1027], ["7. 12. 1908", 1109, 1217, 1055]
];
const scan = document.getElementById("scan");
function add(name, cls, attrs) {
  const el = document.createElementNS(SVG, name);
  el.setAttribute("class", cls);
  for (const k in attrs) el.setAttribute(k, attrs[k]);
  scan.appendChild(el);
  return el;
}

// Text regions
for (const [x, y, w, h] of [[958, 178.5, 343.5, 37.5], [579, 227.5, 228.500, 850], [822.5, 240, 230, 850], [1059.5, 235.5, 230, 850]])
  add("rect", "reg", { x, y, width: w, height: h });

// Selected line
add("polygon", "cur", { points: "850,566 861,564 864,588 852,590", "fill-opacity": ".6" });
add("rect", "curbox", { x: 849.5, y: 563.5, width: 16, height: 28 });

// Old-style numerals: 0, 1, 2 at x-height; 3, 4, 5, 7, 9 drop below the baseline
function fillInk(el, text) {
  let drop = 0;
  for (const run of text.match(/[012]+|[34579]+|[^0-5 7 9]+|[ ]+/g)) {
    const t = document.createElementNS(SVG, "tspan");
    const want = /[34579]/.test(run) ? 4 : 0;
    if (/[012]/.test(run)) t.setAttribute("class", "small");
    t.setAttribute("dy", want - drop);
    drop = want;
    t.textContent = run;
    el.appendChild(t);
  }
}

page.forEach(([text, a, b, y], i) => {
  const date = /^\[?[\d ]/.test(text), open = text.startsWith("[  "), shut = text.endsWith("]");
  const l = open ? a + 20 : a, r = shut ? b - 8 : b, k = i % 4;
  add("polygon", "shade", { points: `${l + 2},${y - 19 + k % 2} ${r - 2},${y - 18 - k % 2} ${r - 1},${y} ${l},${y}` });
  add("path", "base", { d: `M${l} ${y - 1.5}H${r - 2}` });
  const w = r - l, x = f => (l + w * f).toFixed(1);
  add("polygon", "poly", {
    points: date
      ? `${l - 4},${y - 15} ${x(.2)},${y - 18 + k} ${x(.28)},${y - 9} ${x(.37)},${y - 9} ${x(.48)},${y - 18} ${x(.57)},${y - 10 - k} ${x(.68)},${y - 16} ${x(.82)},${y - 19 + k} ${r + 2},${y - 16} ${r + 2},${y + 2} ${x(.85)},${y + 7} ${x(.72)},${y + 2} ${x(.58)},${y + 1} ${x(.45)},${y + 6} ${x(.3)},${y + 1} ${x(.15)},${y + 6 - k} ${l - 4},${y + 1}`
      : `${l - 4},${y - 18} ${x(.18)},${y - 18} ${x(.26)},${y - 20} ${x(.36)},${y - 14} ${x(.46 + k * .02)},${y - 19} ${x(.7)},${y - 16} ${x(.82)},${y - 20 + k} ${x(.9)},${y - 16} ${r + 3},${y - 16} ${r + 3},${y + 2} ${x(.8)},${y + 2} ${x(.6)},${y + 5} ${x(.5)},${y + 1} ${l - 4},${y + 1}`
  });
  fillInk(add("text", "ink", { x: a, y, textLength: b - a, lengthAdjust: "spacingAndGlyphs" }), text);
});

// Page heading
add("polygon", "shade", { points: "972,187 1290,185 1292,203 972,203" });
add("path", "base", { d: "M972 202.500H1290" });
add("polygon", "poly", { points: "968.5,186.500 1278,182.500 1297,188.500 1297,199.500 1274,209.500 1228,201.500 1150,202.500 968.500,204.500" });
add("text", "ink title-ink", { x: 972, y: 202.5, textLength: 318, lengthAdjust: "spacingAndGlyphs" }).textContent = "Empfänger und Daten der Briefe";

// Speck on the paper
add("rect", "ink", { x: 1343, y: 757, width: 1, height: 1 });
```
